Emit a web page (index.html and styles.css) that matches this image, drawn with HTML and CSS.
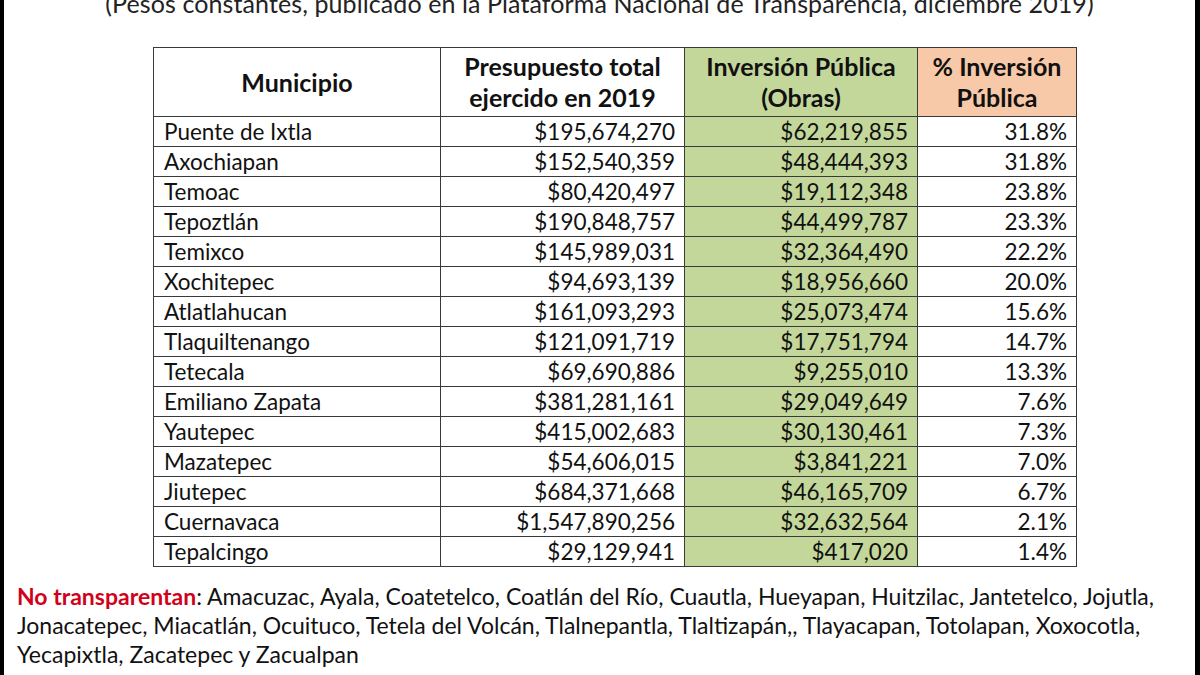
FILE: index.html
```html
<!DOCTYPE html>
<html lang="es">
<head>
<meta charset="utf-8">
<link rel="stylesheet" href="styles.css">
</head>
<body>
<div class="frame">
  <div class="page">
    <p class="title">(Pesos constantes, publicado en la Plataforma Nacional de Transparencia, diciembre 2019)</p>
    <table class="data">
      <colgroup>
        <col class="c1"><col class="c2"><col class="c3"><col class="c4">
      </colgroup>
      <thead>
        <tr>
          <th>Municipio</th>
          <th>Presupuesto total<br>ejercido en 2019</th>
          <th class="green">Inversión Pública<br>(Obras)</th>
          <th class="orange">% Inversión<br>Pública</th>
        </tr>
      </thead>
      <tbody>
        <tr><td>Puente de Ixtla</td><td class="num">$195,674,270</td><td class="num green">$62,219,855</td><td class="num">31.8%</td></tr>
        <tr><td>Axochiapan</td><td class="num">$152,540,359</td><td class="num green">$48,444,393</td><td class="num">31.8%</td></tr>
        <tr><td>Temoac</td><td class="num">$80,420,497</td><td class="num green">$19,112,348</td><td class="num">23.8%</td></tr>
        <tr><td>Tepoztlán</td><td class="num">$190,848,757</td><td class="num green">$44,499,787</td><td class="num">23.3%</td></tr>
        <tr><td>Temixco</td><td class="num">$145,989,031</td><td class="num green">$32,364,490</td><td class="num">22.2%</td></tr>
        <tr><td>Xochitepec</td><td class="num">$94,693,139</td><td class="num green">$18,956,660</td><td class="num">20.0%</td></tr>
        <tr><td>Atlatlahucan</td><td class="num">$161,093,293</td><td class="num green">$25,073,474</td><td class="num">15.6%</td></tr>
        <tr><td>Tlaquiltenango</td><td class="num">$121,091,719</td><td class="num green">$17,751,794</td><td class="num">14.7%</td></tr>
        <tr><td>Tetecala</td><td class="num">$69,690,886</td><td class="num green">$9,255,010</td><td class="num">13.3%</td></tr>
        <tr><td>Emiliano Zapata</td><td class="num">$381,281,161</td><td class="num green">$29,049,649</td><td class="num">7.6%</td></tr>
        <tr><td>Yautepec</td><td class="num">$415,002,683</td><td class="num green">$30,130,461</td><td class="num">7.3%</td></tr>
        <tr><td>Mazatepec</td><td class="num">$54,606,015</td><td class="num green">$3,841,221</td><td class="num">7.0%</td></tr>
        <tr><td>Jiutepec</td><td class="num">$684,371,668</td><td class="num green">$46,165,709</td><td class="num">6.7%</td></tr>
        <tr><td>Cuernavaca</td><td class="num">$1,547,890,256</td><td class="num green">$32,632,564</td><td class="num">2.1%</td></tr>
        <tr><td>Tepalcingo</td><td class="num">$29,129,941</td><td class="num green">$417,020</td><td class="num">1.4%</td></tr>
      </tbody>
    </table>
    <p class="note"><span class="red">No transparentan</span>: Amacuzac, Ayala, Coatetelco, Coatlán del Río, Cuautla, Hueyapan, Huitzilac, Jantetelco, Jojutla,<br>Jonacatepec, Miacatlán, Ocuituco, Tetela del Volcán, Tlalnepantla, Tlaltizapán,, Tlayacapan, Totolapan, Xoxocotla,<br>Yecapixtla, Zacatepec y Zacualpan</p>
  </div>
</div>
</body>
</html>
```

FILE: styles.css
```css
html, body {
  margin: 0;
  padding: 0;
  background: #000;
}
.frame {
  width: 1200px;
  height: 675px;
  box-sizing: border-box;
  border-left: 4px solid #000;
  border-right: 5px solid #000;
  overflow: hidden;
  background: #fff;
}
.page {
  background: #fff;
  height: 675px;
  font-family: Lato, "Liberation Sans", sans-serif;
  color: #111;
}
.title {
  margin: -12px 0 0 0;
  text-align: center;
  font-size: 25px;
  line-height: 30px;
  color: #222;
  letter-spacing: 0.1px;
  white-space: nowrap;
}
.data {
  margin: 29px 0 0 149px;
  border-collapse: collapse;
  table-layout: fixed;
  width: 923px;
  font-size: 22.5px;
}
.c1 { width: 287px; }
.c2 { width: 244px; }
.c3 { width: 233px; }
.c4 { width: 159px; }
.data th, .data td {
  border: 1px solid #3a3a3a;
  padding: 0 9px 0 10px;
}
.data th {
  height: 68px;
  font-size: 25px;
  font-weight: 700;
  line-height: 31px;
  text-align: center;
  padding: 0 2px;
  white-space: nowrap;
}
.data td {
  height: 29px;
  line-height: 29px;
  white-space: nowrap;
}
.data td.num {
  text-align: right;
}
.green { background: #c4d79b; }
.orange { background: #f8c9a8; }
.note {
  margin: 15px 0 0 13px;
  font-size: 23px;
  line-height: 29px;
  color: #111;
  white-space: nowrap;
}
.red {
  color: #d0021b;
  font-weight: 700;
}
```
